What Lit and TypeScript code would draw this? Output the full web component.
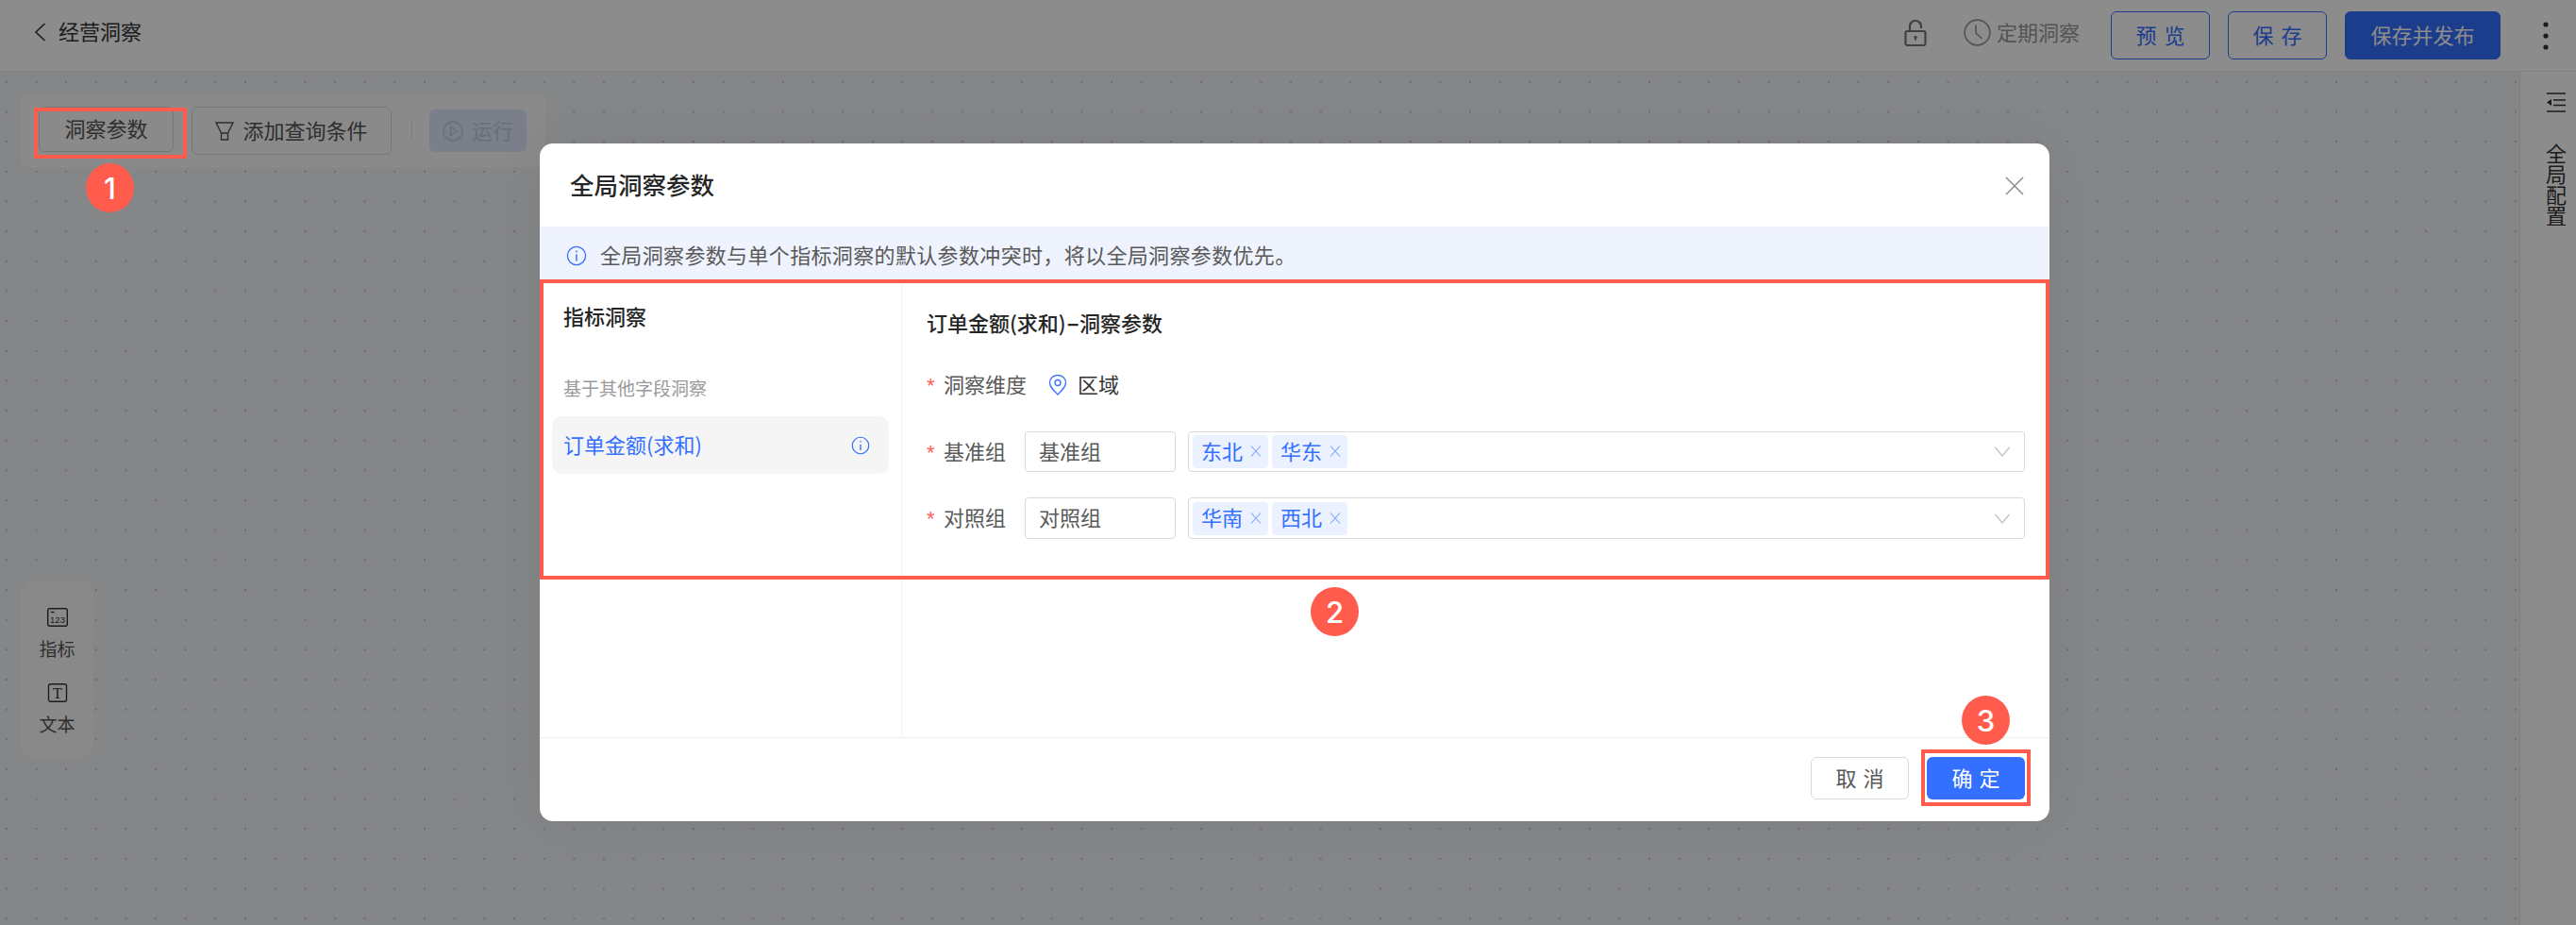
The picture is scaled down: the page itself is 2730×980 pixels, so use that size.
import { LitElement, html, css } from "lit";
import { customElement } from "lit/decorators.js";

const info = (cls: string) => html`<svg class=${cls} viewBox="0 0 22 22" fill="none" stroke="#3370ff" stroke-width="1.3"><circle cx="11" cy="11" r="9.6"/><path d="M11 9.5v7" stroke-width="1.5"/><circle cx="11" cy="6.4" r=".9" fill="#3370ff" stroke="none"/></svg>`;
const chevDown = html`<svg class="chev" viewBox="0 0 16 11" fill="none" stroke="#bfbfbf" stroke-width="1.2"><path d="M.5 1 8 10l7.5-9"/></svg>`;
const close = html`<svg class="tagx" viewBox="0 0 12 14" fill="none" stroke="#3370ff" stroke-opacity=".6" stroke-width="1.1"><path d="M1 1.5l10 11M11 1.5 1 12.5"/></svg>`;
const tag = (t: string) => html`<span class="tag">${t}${close}</span>`;

@customElement("app-root")
export class AppRoot extends LitElement {
  static styles = css`
    :host { display: block; position: relative; width: 2730px; height: 980px; overflow: hidden; font-family: "Noto Sans CJK SC", "Liberation Sans", sans-serif; font-size: 22px; color: #333; background: #fff; text-spacing-trim: space-all; }
    * { box-sizing: border-box; }
    svg { display: block; flex: none; }
    .page { display: flex; flex-direction: column; height: 980px; }
    .top { height: 76px; flex: none; display: flex; align-items: center; padding: 0 29px 8px 36px; background: #fff; border-bottom: 1px solid #e8e8e8; }
    .back { width: 13px; height: 20px; margin-right: 13px; }
    .crumb { color: #333; line-height: 30px; margin-bottom: 3px; }
    .lock { width: 24px; height: 28px; margin-left: auto; margin-top: 2px; }
    .clock { width: 29px; height: 29px; margin-left: 39px; margin-top: 2px; }
    .sched { color: #999; margin-left: 6px; line-height: 30px; margin-right: 33px; margin-bottom: 1px; }
    .tbtn { height: 51px; display: flex; align-items: center; justify-content: center; border: 1px solid #3370ff; border-radius: 6px; color: #3370ff; width: 105px; margin-right: 19px; margin-top: 8px; padding-bottom: 4px; word-spacing: 3px; }
    .tbtn.pub { width: 165px; background: #3370ff; color: #fff; margin-right: 0; }
    .more { margin-left: 45px; width: 6px; height: 30px; margin-top: 8px; }
    .work { flex: 1; display: flex; min-height: 0; }
    .canvas { flex: 1; padding: 24px 22px 0; background-color: #f3f5f8; background-image: radial-gradient(circle at center, #c6c8cc 0, #c6c8cc 1.2px, transparent 1.6px); background-size: 31.67px 31.67px; background-position: -9px -5px; }
    .toolbar { width: 556px; height: 77px; display: flex; align-items: flex-start; padding: 13px 0 0 19px; background: #fbfbfb; border-radius: 8px; }
    .btn { display: flex; align-items: center; justify-content: center; border: 1px solid #d9d9d9; border-radius: 6px; color: #555; padding-bottom: 4px; }
    .b1 { width: 143px; height: 48px; margin-right: 19px; }
    .b2 { width: 212px; height: 51px; gap: 9px; }
    .funnel { width: 20px; height: 20px; margin-top: 4px; }
    .vline { width: 1px; height: 22px; background: #e5e5e5; margin: 14px 18px 0 21px; }
    .run { width: 103px; height: 45px; margin-top: 3px; display: flex; align-items: center; justify-content: center; gap: 9px; border-radius: 6px; background: #dfe8fb; color: #bcc8e3; }
    .run span { margin-bottom: 4px; }
    .play { width: 22px; height: 22px; }
    .palette { width: 77px; height: 187px; margin-top: 438px; background: #fafafa; border-radius: 14px; display: flex; flex-direction: column; align-items: center; padding-top: 29px; color: #555; font-size: 19px; line-height: 28px; }
    .pal-ico { width: 22px; height: 20px; }
    .pal-lbl { margin: 9px 0 23px; }
    .side { width: 60px; flex: none; background: #fff; border-left: 1px solid #e8e8e8; padding: 22px 0 0 28px; }
    .outd { width: 20px; height: 21px; }
    .vtext { writing-mode: vertical-rl; margin: 33px 0 0 -3px; line-height: 26px; color: #333; }
    .mask { position: absolute; inset: 0; background: rgba(0, 0, 0, .45); }
    .dialog { position: absolute; left: 572px; top: 152px; width: 1600px; height: 718px; background: #fff; border-radius: 14px; display: flex; flex-direction: column; overflow: hidden; box-shadow: 0 0 60px rgba(0,0,0,.06); }
    .dhead { height: 89px; flex: none; display: flex; align-items: center; justify-content: space-between; padding: 0 27px 0 32px; border-bottom: 1px solid #f0f0f0; }
    .dtitle { font-size: 25.5px; font-weight: 500; color: #262626; margin-bottom: 3px; }
    .x { width: 20px; height: 20px; margin-top: 2px; }
    .notice { height: 59px; flex: none; display: flex; align-items: center; gap: 14px; padding-left: 28px; background: #eff3fd; color: #595959; letter-spacing: .35px; }
    .notice span { margin-bottom: 3px; }
    .ninfo { width: 22px; height: 22px; }
    .dbody { flex: 1; display: flex; min-height: 0; }
    .nav { width: 384px; flex: none; border-right: 1px solid #f0f0f0; padding: 18px 13px 0; }
    .nav h4 { margin: 0 0 0 12px; font-size: 22px; font-weight: 500; color: #262626; line-height: 32px; }
    .nav p { margin: 47px 0 0 12px; font-size: 19px; color: #999; line-height: 28px; }
    .item { margin-top: 16px; height: 61px; padding: 0 20px 0 12px; background: #f5f5f5; border-radius: 10px; display: flex; align-items: center; justify-content: space-between; color: #3370ff; }
    .item span { margin-bottom: 4px; }
    .iinfo { width: 20px; height: 20px; }
    .form { flex: 1; padding: 26px 26px 0 26px; display: flex; flex-direction: column; }
    .form h3 { margin: 0; height: 30px; flex: none; font-size: 22px; font-weight: 500; line-height: 30px; color: #262626; }
    .dash { display: inline-block; line-height: 20px; font-family: "Inter", sans-serif; font-weight: 600; margin: 0 2px; transform: scaleX(1.5); }
    .row { display: flex; align-items: center; }
    .r1 { margin-top: 37px; height: 30px; }
    .r2 { margin-top: 34px; height: 43px; }
    .r3 { margin-top: 27px; height: 44px; }
    .star { width: 18px; color: #ff5c5c; font-family: "Liberation Sans", sans-serif; height: 22px; line-height: 28px; margin-bottom: 4px; }
    .lbl { color: #595959; margin-bottom: 4px; }
    .pin { width: 20px; height: 22px; margin: 0 11px 0 23px; }
    .val { color: #333; margin-bottom: 4px; }
    .input { width: 160px; height: 100%; margin-left: 20px; padding: 0 0 4px 14px; border: 1px solid #d9d9d9; border-radius: 4px; display: flex; align-items: center; color: #595959; }
    .select { flex: 1; height: 100%; margin-left: 13px; border: 1px solid #d9d9d9; border-radius: 4px; padding: 0 15px 0 4px; display: flex; align-items: center; gap: 4px; }
    .tag { width: 80px; height: 35px; background: #ebf1ff; border-radius: 4px; color: #3370ff; display: flex; align-items: center; padding: 0 0 4px 9px; gap: 8px; }
    .tagx { width: 12px; height: 14px; margin-top: 3px; }
    .chev { width: 16px; height: 11px; margin-left: auto; }
    .foot { height: 89px; flex: none; border-top: 1px solid #eee; display: flex; justify-content: flex-end; align-items: flex-start; gap: 19px; padding: 20px 26px 0 0; }
    .fbtn { width: 104px; height: 45px; border-radius: 6px; display: flex; align-items: center; justify-content: center; padding-bottom: 4px; word-spacing: 2px; }
    .cancel { border: 1px solid #d9d9d9; color: #595959; }
    .ok { background: #3370ff; color: #fff; }
    .frame { position: absolute; border: 4px solid #ff5c4d; }
    .f1 { left: 36px; top: 114px; width: 162px; height: 54px; }
    .f2 { left: 572px; top: 296px; width: 1600px; height: 318px; }
    .f3 { left: 2036px; top: 794px; width: 116px; height: 60px; }
    .badge { position: absolute; width: 51px; height: 52px; border-radius: 50%; background: #ff5c4d; color: #fff; display: flex; align-items: center; justify-content: center; font-family: "Inter", "Liberation Sans", sans-serif; font-size: 31px; font-weight: 500; }
    .n1 { left: 91px; top: 173px; }
    .n2 { left: 1389px; top: 622px; }
    .n3 { left: 2079px; top: 737px; }
  `;

  render() {
    return html`
      <div class="page">
        <header class="top">
          <svg class="back" viewBox="0 0 13 20" fill="none" stroke="#333" stroke-width="1.6"><path d="M11.5 1 2 10l9.5 9"/></svg>
          <span class="crumb">经营洞察</span>
          <svg class="lock" viewBox="0 0 24 28" fill="none" stroke="#777" stroke-width="2.200"><rect x="1.500" y="12" width="21" height="15" rx="2"/><path d="M6 12V6.500a6 5.500 0 0 1 12 0V9"/><circle cx="12" cy="18.500" r="1.700" fill="#777" stroke="none"/><path d="M12 19v3" stroke-width="1.500"/></svg>
          <svg class="clock" viewBox="0 0 29 29" fill="none" stroke="#999" stroke-width="1.7"><circle cx="14.500" cy="14.500" r="13.400"/><path d="M13 6.500V15l6.500 6"/></svg>
          <span class="sched">定期洞察</span>
          <div class="tbtn">预 览</div>
          <div class="tbtn">保 存</div>
          <div class="tbtn pub">保存并发布</div>
          <svg class="more" viewBox="0 0 6 30" fill="#333"><circle cx="3" cy="3" r="2.600"/><circle cx="3" cy="15" r="2.600"/><circle cx="3" cy="27" r="2.600"/></svg>
        </header>
        <div class="work">
          <main class="canvas">
            <div class="toolbar">
              <div class="btn b1">洞察参数</div>
              <div class="btn b2">
                <svg class="funnel" viewBox="0 0 20 20" fill="none" stroke="#555" stroke-width="1.4"><path d="M1 1h18l-5.500 11h-7zM6.500 12v7h7v-7"/></svg>
                添加查询条件
              </div>
              <div class="vline"></div>
              <div class="run">
                <svg class="play" viewBox="0 0 22 22" fill="none" stroke="#bcc8e3" stroke-width="1.5"><circle cx="11" cy="11" r="10"/><path d="M8.500 6.500 15 11l-6.500 4.500z"/></svg>
                <span>运行</span>
              </div>
            </div>
            <div class="palette">
              <svg class="pal-ico" viewBox="0 0 22 20" fill="none" stroke="#333" stroke-width="1.4"><rect x=".7" y=".7" width="20.600" height="18.600" rx="2"/><path d="M4 4.500h3.500"/><text x="11" y="16" text-anchor="middle" font-size="9.500" fill="#333" stroke="none" font-family="Liberation Sans">123</text></svg>
              <span class="pal-lbl">指标</span>
              <svg class="pal-ico" viewBox="0 0 22 20" fill="none" stroke="#333" stroke-width="1.4"><rect x="1.500" y=".7" width="19" height="18.600" rx="2"/><text x="11" y="15.500" text-anchor="middle" font-size="16" fill="#333" stroke="none" font-family="Liberation Serif">T</text></svg>
              <span class="pal-lbl">文本</span>
            </div>
          </main>
          <aside class="side">
            <svg class="outd" viewBox="0 0 20 21" fill="none" stroke="#333" stroke-width="1.4"><path d="M0 1h20M0 20h20M7 8h13M7 13.500h13"/><path d="M0 10.500 5 7v7z" fill="#333" stroke="none"/></svg>
            <div class="vtext">全局配置</div>
          </aside>
        </div>
      </div>
      <div class="mask"></div>
      <section class="dialog">
        <div class="dhead">
          <span class="dtitle">全局洞察参数</span>
          <svg class="x" viewBox="0 0 20 20" fill="none" stroke="#8c8c8c" stroke-width="1.5"><path d="M1 1l18 18M19 1 1 19"/></svg>
        </div>
        <div class="notice">${info("ninfo")}<span>全局洞察参数与单个指标洞察的默认参数冲突时，将以全局洞察参数优先。</span></div>
        <div class="dbody">
          <nav class="nav">
            <h4>指标洞察</h4>
            <p>基于其他字段洞察</p>
            <div class="item"><span>订单金额(求和)</span>${info("iinfo")}</div>
          </nav>
          <div class="form">
            <h3>订单金额(求和)<span class="dash">-</span>洞察参数</h3>
            <div class="row r1">
              <span class="star">*</span><span class="lbl">洞察维度</span>
              <svg class="pin" viewBox="0 0 20 22" fill="none" stroke="#3370ff" stroke-width="1.3"><path d="M10 21C5 16 1.500 12.500 1.500 8.500a8.500 8 0 0 1 17 0C18.500 12.500 15 16 10 21z"/><circle cx="10" cy="8.500" r="3"/></svg>
              <span class="val">区域</span>
            </div>
            <div class="row r2">
              <span class="star">*</span><span class="lbl">基准组</span>
              <div class="input">基准组</div>
              <div class="select">${tag("东北")}${tag("华东")}${chevDown}</div>
            </div>
            <div class="row r3">
              <span class="star">*</span><span class="lbl">对照组</span>
              <div class="input">对照组</div>
              <div class="select">${tag("华南")}${tag("西北")}${chevDown}</div>
            </div>
          </div>
        </div>
        <div class="foot">
          <div class="fbtn cancel">取 消</div>
          <div class="fbtn ok">确 定</div>
        </div>
      </section>
      <div class="frame f1"></div>
      <div class="frame f2"></div>
      <div class="frame f3"></div>
      <div class="badge n1">1</div>
      <div class="badge n2">2</div>
      <div class="badge n3">3</div>
    `;
  }
}
